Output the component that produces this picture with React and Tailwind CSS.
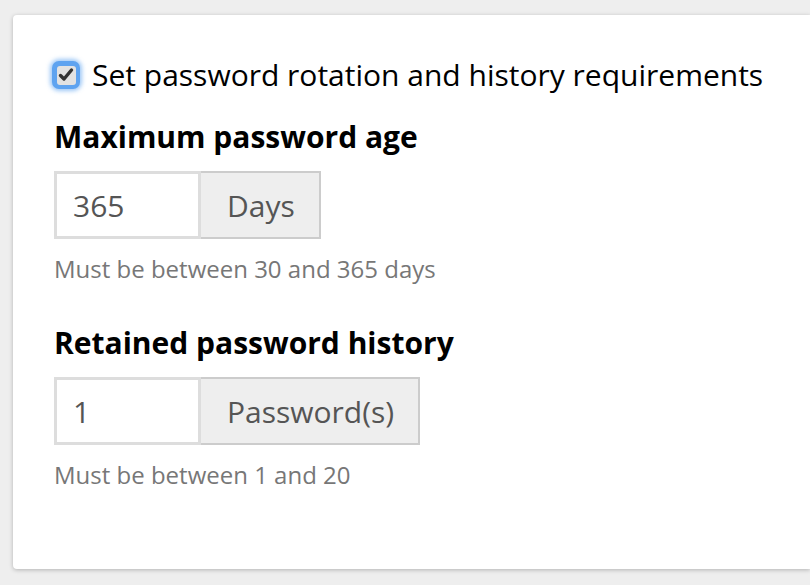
export default function App() {
  return (
    <div className="min-h-screen bg-[#eeeeee] pl-[13px] pt-[15px]" style={{ fontFamily: '"Open Sans", sans-serif' }}>
      <div className="h-[554px] rounded-l-[4px] bg-white pl-[41px] pt-[45px] shadow-[0_1px_4px_rgba(0,0,0,0.25)]">
        {/* rotation toggle */}
        <label className="-ml-[2px] flex items-center gap-[12px]">
          <span className="flex h-[28px] w-[28px] items-center justify-center rounded-[7px] bg-[#5ea3f0] shadow-[0_0_4px_2px_rgba(94,163,240,0.6)]">
            <span className="flex h-[19px] w-[19px] items-center justify-center rounded-[3px] bg-[#e2e2e2]">
              <svg viewBox="0 0 16 16" className="h-[16px] w-[16px]">
                <path d="M2.5 8.5 L6 12 L13.5 3" fill="none" stroke="#333" strokeWidth="3.4" strokeLinecap="round" strokeLinejoin="round" />
              </svg>
            </span>
          </span>
          <span className="text-[30px] leading-none text-black">Set password rotation and history requirements</span>
        </label>

        <h3 className="mt-[32px] text-[30px] font-bold leading-none text-black">Maximum password age</h3>
        <div className="mt-[19px] flex">
          <input defaultValue="365" className="h-[68px] w-[147px] border-[3px] border-[#dddddd] bg-white px-[16px] text-[30px] text-[#555] outline-none" />
          <span className="flex h-[68px] items-center border-2 border-l-0 border-[#cccccc] bg-[#eeeeee] pl-[26px] pr-[24px] text-[30px] text-[#555]">Days</span>
        </div>
        <p className="mt-[18px] text-[24px] leading-none text-[#777]">Must be between 30 and 365 days</p>

        <h3 className="mt-[47px] text-[30px] font-bold leading-none text-black">Retained password history</h3>
        <div className="mt-[19px] flex">
          <input defaultValue="1" className="h-[68px] w-[147px] border-[3px] border-[#dddddd] bg-white px-[16px] text-[30px] text-[#555] outline-none" />
          <span className="flex h-[68px] items-center border-2 border-l-0 border-[#cccccc] bg-[#eeeeee] pl-[26px] pr-[24px] text-[30px] text-[#555]">Password(s)</span>
        </div>
        <p className="mt-[18px] text-[24px] leading-none text-[#777]">Must be between 1 and 20</p>
      </div>
    </div>
  )
}
